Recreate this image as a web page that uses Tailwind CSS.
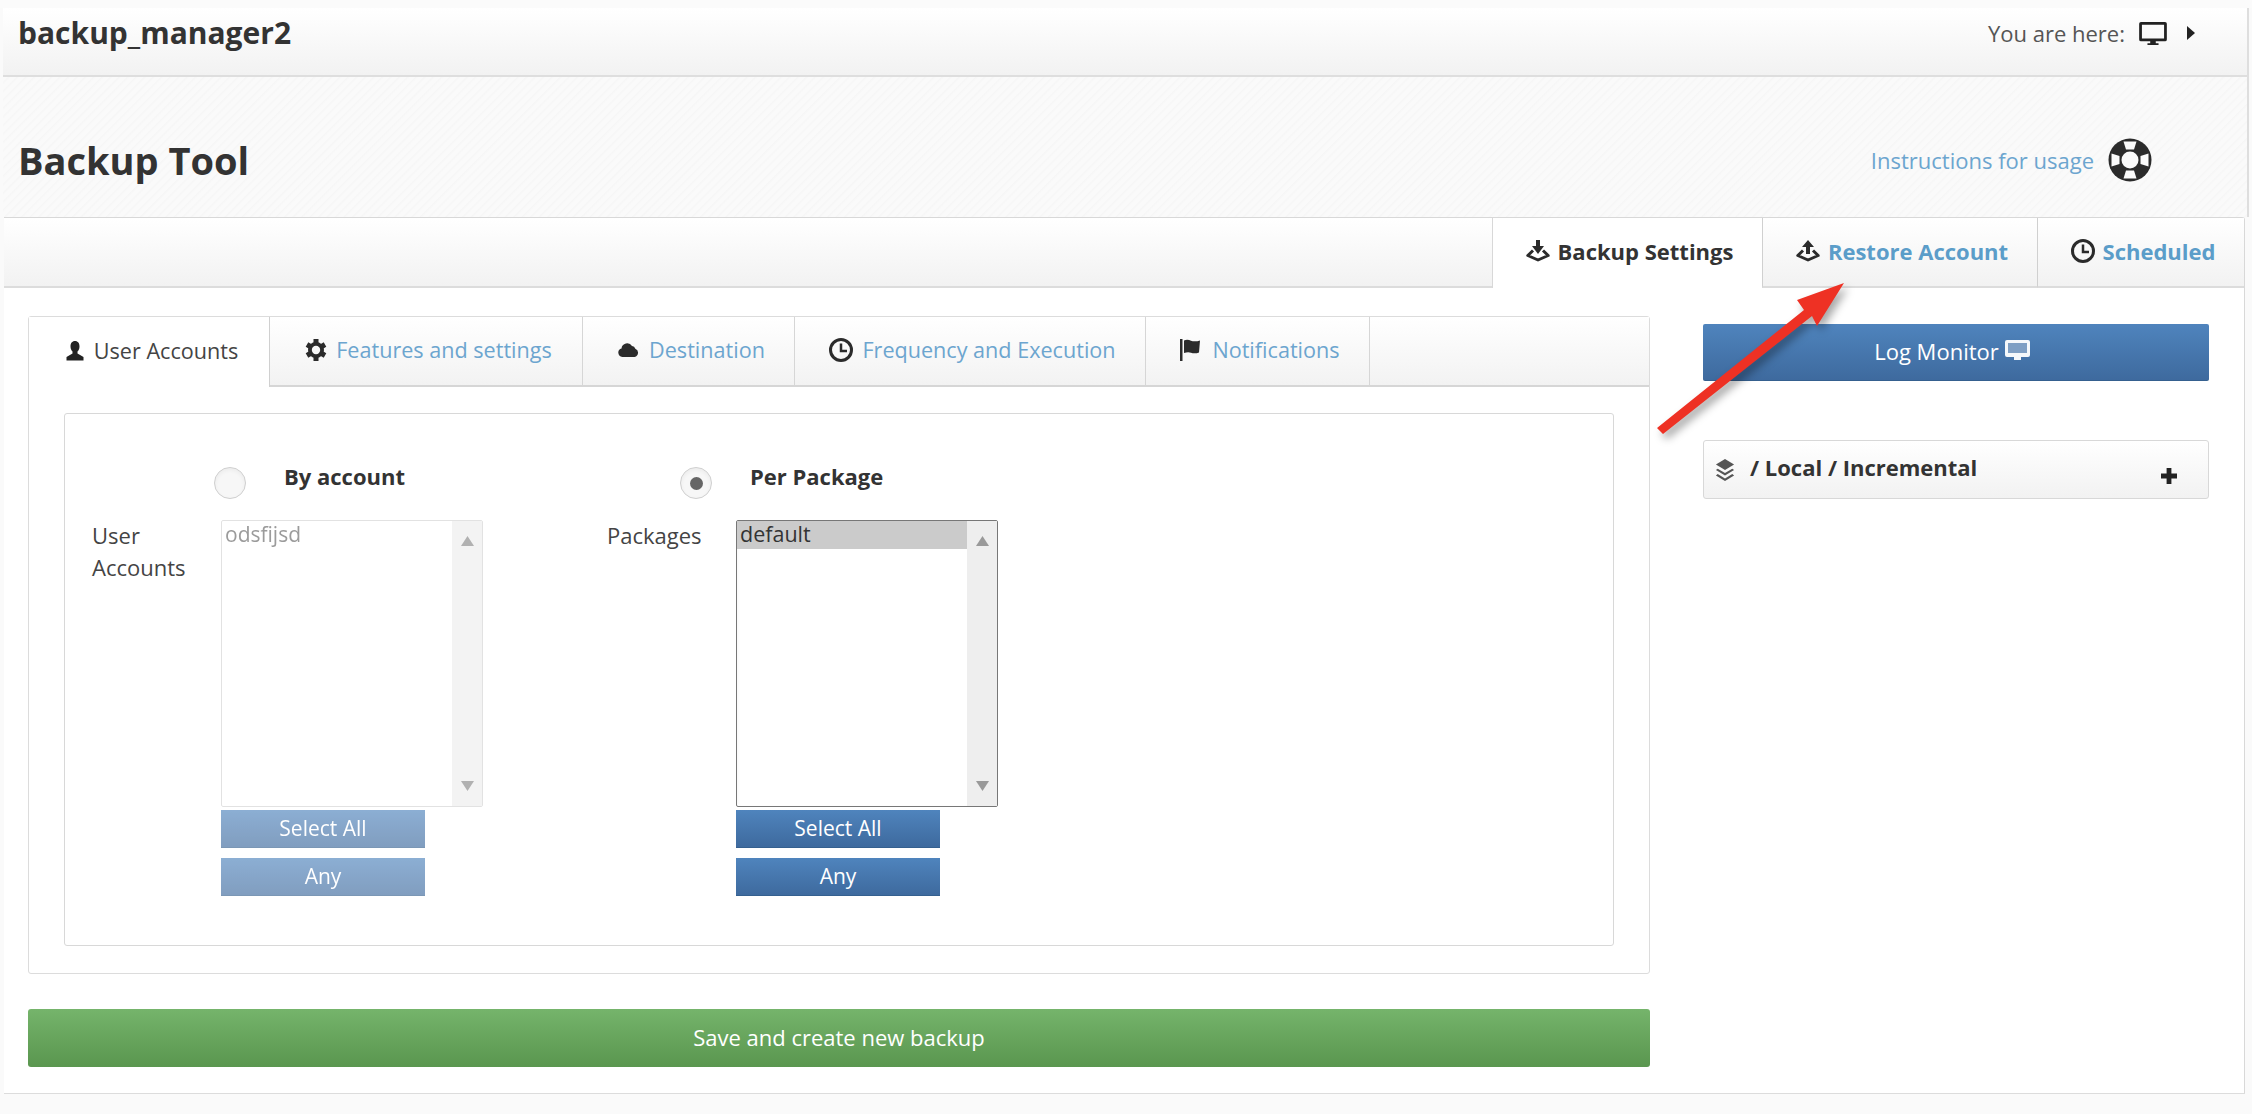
<!DOCTYPE html>
<html lang="en">
<head>
  <meta charset="UTF-8">
  <title>Backup Tool</title>
  <script src="https://cdn.jsdelivr.net/npm/@tailwindcss/browser@4"></script>
</head>
<body class="bg-[#fafafa] text-[#333] font-['Open_Sans','Noto_Sans',sans-serif] w-[2252px] h-[1114px] overflow-hidden relative">
  <div class="h-[8px] bg-[#fbfbfb]"></div>

  <!-- top bar -->
  <div class="h-[69px] ml-[3px] mr-[3px] flex items-start justify-between bg-gradient-to-b from-white to-[#f2f2f2] border-b-2 border-r-2 border-[#dedede]">
    <h2 class="ml-[15px] mt-[7px] text-[30px] leading-[36px] font-bold">backup_manager2</h2>
    <div class="flex items-center mt-[11px] mr-[52px] text-[22px] leading-[28px] text-[#555]">
      <span>You are here:</span>
      <svg class="w-[28px] h-[24px] ml-[14px] text-[#222]" viewBox="0 0 30 26" fill="currentColor"><path fill-rule="evenodd" d="M2 1h26a2 2 0 0 1 2 2v17a2 2 0 0 1-2 2H18v2h3v2H9v-2h3v-2H2a2 2 0 0 1-2-2V3a2 2 0 0 1 2-2zm1 3v15h24V4z"/></svg>
      <svg class="w-[8px] h-[14px] ml-[20px] text-[#222]" viewBox="0 0 8 14" fill="currentColor"><path d="M0 0l8 7-8 7z"/></svg>
    </div>
  </div>

  <!-- page title -->
  <div class="h-[140px] ml-[3px] mr-[3px] flex items-center justify-between border-r-2 border-[#dedede] bg-[#fafafa] bg-[repeating-linear-gradient(135deg,#fafafa_0px,#fafafa_3px,#f6f6f6_4px,#fafafa_6px)]">
    <h1 class="ml-[15px] mt-[26px] text-[38px] leading-[44px] font-bold">Backup Tool</h1>
    <div class="flex items-center mr-[95px] mt-[26px]">
      <a class="text-[22px] text-[#6ca5cf]">Instructions for usage</a>
      <svg class="w-[44px] h-[44px] ml-[14px]" viewBox="0 0 44 44">
        <circle cx="22" cy="22" r="21.500" fill="#2b2b2b"/>
        <circle cx="22" cy="22" r="8.500" fill="#fafafa"/>
        <path fill="#fafafa" d="M15.500 3.500h13l-2.500 8h-8zM15.500 40.500h13l-2.500-8h-8zM3.500 15.500v13l8-2.500v-8zM40.500 15.500v13l-8-2.500v-8z"/>
      </svg>
    </div>
  </div>

  <!-- main panel -->
  <div class="ml-[4px] mr-[7px] h-[876px] flex flex-col bg-white border-t border-r border-[#d8d8d8] rounded-tr-[3px]">
    <div class="h-[70px] shrink-0 flex justify-end">
      <div class="flex-1 bg-gradient-to-b from-white to-[#f2f2f2] border-b-2 border-[#dcdcdc]"></div>
      <div class="w-[270px] flex items-center justify-center border-l border-[#d8d8d8] bg-white text-[22px] font-bold text-[#333] gap-[8px] pb-[4px] pl-[4px]">
        <svg class="w-[24px] h-[22px] text-[#2b2b2b]" viewBox="0 0 24 22" fill="none" stroke="currentColor"><path d="M7 10.500L1.800 15.500 12 20l10.200-4.500L17 10.500" stroke-width="3" stroke-linejoin="round"/><path fill="currentColor" stroke="none" d="M10 0h4v6h4l-6 8-6-8h4z"/></svg>
        <span>Backup Settings</span>
      </div>
      <div class="w-[275px] flex items-center justify-center border-l border-[#d0d0d0] border-b-2 border-b-[#dcdcdc] bg-gradient-to-b from-white to-[#f2f2f2] text-[22px] font-bold text-[#5b9dc9] gap-[8px] pb-[2px] pl-[4px]">
        <svg class="w-[24px] h-[22px] text-[#2b2b2b]" viewBox="0 0 24 22" fill="none" stroke="currentColor"><path d="M7 10.500L1.800 15.500 12 20l10.200-4.500L17 10.500" stroke-width="3" stroke-linejoin="round"/><path fill="currentColor" stroke="none" d="M12 0l6 7h-4v7h-4V7H6z"/></svg>
        <span>Restore Account</span>
      </div>
      <div class="w-[207px] flex items-center justify-center border-l border-[#d0d0d0] border-b-2 border-b-[#dcdcdc] bg-gradient-to-b from-white to-[#f2f2f2] text-[22px] font-bold text-[#5b9dc9] gap-[8px] pb-[2px] pl-[4px]">
        <svg class="w-[24px] h-[24px] text-[#2b2b2b]" viewBox="0 0 24 24" fill="none" stroke="currentColor"><circle cx="12" cy="12" r="10.500" stroke-width="3"/><path d="M12 5.500V13H18" stroke-width="2.500"/></svg>
        <span>Scheduled</span>
      </div>
    </div>

    <div class="flex flex-1 pl-[24px]">
      <!-- left column -->
      <div class="w-[1622px] pt-[28px]">
        <div class="h-[658px] border border-[#dcdcdc] rounded-[3px] flex flex-col">
          <div class="h-[70px] shrink-0 flex bg-gradient-to-b from-white to-[#f2f2f2] text-[21.600px]">
            <div class="w-[241px] flex items-center justify-center gap-[9px] bg-white border-r border-[#d0d0d0] text-[#444] pb-[2px] pl-[5px]">
              <svg class="w-[20px] h-[20px] text-[#222]" viewBox="0 0 20 20" fill="currentColor"><path d="M10 0c3 0 4.500 2.300 4.500 5.500 0 2.400-1 4-2 5v2l6 3.500v3.500H1.500V16l6-3.500v-2c-1-1-2-2.600-2-5C5.500 2.300 7 0 10 0z"/></svg>
              <span>User Accounts</span>
            </div>
            <div class="w-[313px] flex items-center justify-center gap-[9px] border-r border-b-2 border-[#d6d6d6] text-[#6ca5cf] pb-[2px] pl-[5px]">
              <svg class="w-[22px] h-[24px] text-[#2b2b2b]" viewBox="0 0 22 24"><path fill="none" stroke="currentColor" stroke-width="5" d="M11 1v22M2 6.500l18 11M2 17.500l18-11"/><circle cx="11" cy="12" r="8" fill="currentColor"/><circle cx="11" cy="12" r="4.200" fill="#f8f8f8"/></svg>
              <span>Features and settings</span>
            </div>
            <div class="w-[212px] flex items-center justify-center gap-[9px] border-r border-b-2 border-[#d6d6d6] text-[#6ca5cf] pb-[2px] pl-[5px]">
              <svg class="w-[23px] h-[14px] text-[#2b2b2b]" viewBox="0 0 24 16" fill="currentColor"><path d="M5 16a5 5 0 0 1-1-9.800A6.500 6.500 0 0 1 16 3.500 4.500 4.500 0 0 1 19.800 6.500 5 5 0 0 1 19 16z"/></svg>
              <span>Destination</span>
            </div>
            <div class="w-[351px] flex items-center justify-center gap-[9px] border-r border-b-2 border-[#d6d6d6] text-[#6ca5cf] pb-[2px] pl-[5px]">
              <svg class="w-[24px] h-[24px] text-[#2b2b2b]" viewBox="0 0 24 24" fill="none" stroke="currentColor"><circle cx="12" cy="12" r="10.500" stroke-width="3"/><path d="M12 5.500V13H18" stroke-width="2.500"/></svg>
              <span>Frequency and Execution</span>
            </div>
            <div class="w-[224px] flex items-center justify-center gap-[9px] border-r border-b-2 border-[#d6d6d6] text-[#6ca5cf] pb-[2px] pl-[5px]">
              <svg class="w-[23px] h-[22px] text-[#2b2b2b]" viewBox="0 0 23 22" fill="currentColor"><path d="M0 0h2.500v22H0z"/><path d="M4 1.500c3-1.200 5-.5 7 .3s6 .8 9-.3l-1 12c-3 1.200-6 1-8 .2s-4-.8-7 .3z"/></svg>
              <span>Notifications</span>
            </div>
            <div class="flex-1 border-b-2 border-[#d6d6d6]"></div>
          </div>

          <div class="flex-1 pt-[26px] px-[35px]">
            <div class="h-[533px] border border-[#d8d8d8] rounded-[3px] pt-[52px] pl-[27px] flex gap-[124px]">
              <!-- by account -->
              <div class="flex flex-col">
                <div class="flex h-[54px] pl-[122px]">
                  <span class="w-[32px] h-[32px] mt-[1px] rounded-full border border-[#cfcfcf] bg-[#f7f7f7] mr-[38px] shadow-inner"></span>
                  <span class="text-[22px] font-bold leading-[20px] text-[#333]">By account</span>
                </div>
                <div class="flex">
                  <div class="w-[129px] -mt-[1px] text-[22px] leading-[32px] text-[#444]">User<br>Accounts</div>
                  <div class="w-[262px]">
                    <div class="opacity-65 h-[287px] flex border border-[#d4d4d4] rounded-[2px] bg-white">
                      <div class="flex-1 text-[21px] leading-[26px] text-[#666] pl-[3px]">odsfijsd</div>
                      <div class="w-[30px] flex flex-col items-center justify-between py-[15px] bg-[#eeeeee] text-[#888]">
                        <svg class="w-[13px] h-[10px]" viewBox="0 0 13 10" fill="currentColor"><path d="M6.500 0l6.500 10H0z"/></svg>
                        <svg class="w-[13px] h-[10px]" viewBox="0 0 13 10" fill="currentColor"><path d="M6.500 10L0 0h13z"/></svg>
                      </div>
                    </div>
                    <button class="opacity-65 mt-[3px] block w-[204px] h-[38px] bg-gradient-to-b from-[#4f84bd] to-[#3e6a9e] border-b border-[#35608f] text-white text-[21px]">Select All</button>
                    <button class="opacity-65 mt-[10px] block w-[204px] h-[38px] bg-gradient-to-b from-[#4f84bd] to-[#3e6a9e] border-b border-[#35608f] text-white text-[21px]">Any</button>
                  </div>
                </div>
              </div>
              <!-- per package -->
              <div class="flex flex-col">
                <div class="flex h-[54px] pl-[73px]">
                  <span class="w-[32px] h-[32px] mt-[1px] rounded-full border border-[#cfcfcf] bg-[#f7f7f7] mr-[38px] flex items-center justify-center shadow-inner">
                    <span class="w-[13px] h-[13px] rounded-full bg-[#666]"></span>
                  </span>
                  <span class="text-[22px] font-bold leading-[20px] text-[#333]">Per Package</span>
                </div>
                <div class="flex">
                  <div class="w-[129px] -mt-[1px] text-[22px] leading-[32px] text-[#444]">Packages</div>
                  <div class="w-[262px]">
                    <div class="h-[287px] flex border border-[#777] rounded-[2px] bg-white shadow-inner">
                      <div class="flex-1 text-[21.500px] leading-[25px] text-[#333]"><div class="bg-[#cbcbcb] pl-[3px] pb-[3px]">default</div></div>
                      <div class="w-[30px] flex flex-col items-center justify-between py-[15px] bg-[#eeeeee] text-[#999]">
                        <svg class="w-[13px] h-[10px]" viewBox="0 0 13 10" fill="currentColor"><path d="M6.500 0l6.500 10H0z"/></svg>
                        <svg class="w-[13px] h-[10px]" viewBox="0 0 13 10" fill="currentColor"><path d="M6.500 10L0 0h13z"/></svg>
                      </div>
                    </div>
                    <button class="mt-[3px] block w-[204px] h-[38px] bg-gradient-to-b from-[#4f84bd] to-[#3e6a9e] border-b border-[#35608f] text-white text-[21px]">Select All</button>
                    <button class="mt-[10px] block w-[204px] h-[38px] bg-gradient-to-b from-[#4f84bd] to-[#3e6a9e] border-b border-[#35608f] text-white text-[21px]">Any</button>
                  </div>
                </div>
              </div>
            </div>
          </div>
        </div>
        <button class="mt-[35px] block w-full h-[58px] rounded-[3px] bg-gradient-to-b from-[#75b46b] to-[#5a964f] text-white text-[22px] pb-[2px]">Save and create new backup</button>
      </div>

      <!-- right column -->
      <div class="w-[506px] ml-[53px] pt-[36px]">
        <button class="w-full h-[57px] rounded-[2px] bg-gradient-to-b from-[#4f84bd] to-[#3e6a9e] border-b border-[#35608f] text-white text-[22px] flex items-center justify-center gap-[6px] pr-[8px] pb-[2px]">
          Log Monitor
          <svg class="w-[25px] h-[22px]" viewBox="0 0 25 22" fill="currentColor"><path fill-rule="evenodd" d="M2 0h21a2 2 0 0 1 2 2v13a2 2 0 0 1-2 2h-7v3h-7v-3H2a2 2 0 0 1-2-2V2a2 2 0 0 1 2-2zm1 3v10h19V3z" opacity=".95"/><path d="M3 3h19v10H3z" fill="#7f9fc4"/></svg>
        </button>
        <div class="mt-[59px] h-[59px] flex items-start border border-[#d8d8d8] rounded-[3px] bg-gradient-to-b from-white to-[#f2f2f2] pl-[11px] pr-[31px] text-[22px] font-bold">
          <svg class="w-[20px] h-[22px] mt-[18px] text-[#555]" viewBox="0 0 22 24" fill="currentColor"><path d="M11 0l10 6-10 6L1 6z"/><path d="M3 10.500l8 4.800 8-4.800 2 1.500-10 6-10-6z"/><path d="M3 16.500l8 4.800 8-4.800 2 1.500-10 6-10-6z"/></svg>
          <span class="ml-[15px] mt-[12px] leading-[28px]">/ Local / Incremental</span>
          <svg class="w-[16px] h-[16px] ml-auto mt-[27px] text-[#222]" viewBox="0 0 20 20" fill="currentColor"><path d="M7 0h6v7h7v6h-7v7H7v-7H0V7h7z"/></svg>
        </div>
      </div>
    </div>
  </div>

  <!-- footer strip -->
  <div class="absolute left-[4px] right-[7px] top-[1093px] h-[21px] border-t border-[#dcdcdc] bg-[#fafafa]"></div>

  <!-- annotation arrow -->
  <svg class="absolute left-0 top-0 w-[2252px] h-[1114px] pointer-events-none drop-shadow-[4px_5px_4px_rgba(0,0,0,0.35)]" viewBox="0 0 2252 1114">
    <path fill="#ee3124" d="M1844 283L1817 326 1812 316 1663 434 1657 428 1804 310 1797 300z"/>
  </svg>
</body>
</html>
